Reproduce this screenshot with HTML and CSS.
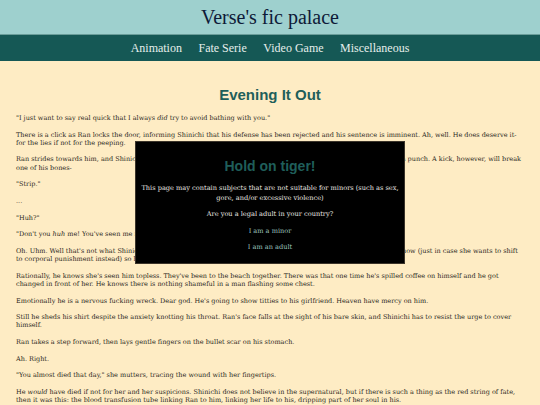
FILE: index.html
```html
<!DOCTYPE html>
<html lang="en">

<head>
    <meta charset="UTF-8">
    <meta name="viewport" content="width=device-width, initial-scale=1.0">
    <title>Evening It Out - Verse's fic palace</title>
    <link rel="stylesheet" href="styles.css">
</head>

<body>
    <header class="site-header">
        <div class="site-title">Verse's fic palace</div>
        <nav class="site-nav">
            <a href="#">Animation</a>
            <a href="#">Fate Serie</a>
            <a href="#">Video Game</a>
            <a href="#">Miscellaneous</a>
        </nav>
    </header>

    <main class="story">
        <h1>Evening It Out</h1>
        <p>"I just want to say real quick that I always <em>did</em> try to avoid bathing with you."</p>
        <p>There is a click as Ran locks the door, informing Shinichi that his defense has been rejected and his sentence is imminent. Ah, well. He does deserve it- for the lies if not for the peeping.</p>
        <p>Ran strides towards him, and Shinichi braces himself for the worst. He can take a slap, he can probably just survive a punch. A kick, however, will break one of his bones-</p>
        <p>"Strip."</p>
        <p>...</p>
        <p>"Huh?"</p>
        <p>"Don't you <em>huh</em> me! You've seen me naked, so now it's my turn!"</p>
        <p>Oh. Uhm. Well that's not what Shinichi was expecting at all, but he really isn't going to argue with her about it right now (just in case she wants to shift to corporal punishment instead) so he complies.</p>
        <p>Rationally, he knows she's seen him topless. They've been to the beach together. There was that one time he's spilled coffee on himself and he got changed in front of her. He knows there is nothing shameful in a man flashing some chest.</p>
        <p>Emotionally he is a nervous fucking wreck. Dear god. He's going to show titties to his girlfriend. Heaven have mercy on him.</p>
        <p>Still he sheds his shirt despite the anxiety knotting his throat. Ran's face falls at the sight of his bare skin, and Shinichi has to resist the urge to cover himself.</p>
        <p>Ran takes a step forward, then lays gentle fingers on the bullet scar on his stomach.</p>
        <p>Ah. Right.</p>
        <p>"You almost died that day," she mutters, tracing the wound with her fingertips.</p>
        <p>He <em>would</em> have died if not for her and her suspicions. Shinichi does not believe in the supernatural, but if there is such a thing as the red string of fate, then it was this: the blood transfusion tube linking Ran to him, linking her life to his, dripping part of her soul in his.</p>
    </main>

    <!-- age check, shown until the reader picks an answer -->
    <div class="gate" id="ageGate">
        <div class="gate-box">
            <h2>Hold on tiger!</h2>
            <p>This page may contain subjects that are not suitable for minors (such as sex, gore, and/or excessive violence)</p>
            <p>Are you a legal adult in your country?</p>
            <p><a href="#">I am a minor</a></p>
            <p><a href="#" onclick="document.getElementById('ageGate').style.display = 'none'">I am an adult</a></p>
        </div>
    </div>
</body>

</html>
```

FILE: styles.css
```css
body {
    margin: 0;
    background-color: #feecc4;
    color: #2a2722;
    font-family: "Liberation Serif", "DejaVu Serif", serif;
}

.site-header {
    text-align: center;
}

.site-title {
    background-color: #9ed0ce;
    color: #0e1a38;
    font-size: 20px;
    line-height: 34px;
    height: 34px;
    border-bottom: 1px solid #6a9d9a;
}

.site-nav {
    background-color: #155855;
    height: 26px;
    display: flex;
    justify-content: center;
    align-items: center;
    gap: 16.5px;
}

.site-nav a {
    color: #e6efec;
    text-decoration: none;
    font-size: 12px;
}

/* story text: small, sturdy serif */
.story,
.gate-box {
    font-family: "DejaVu Serif", "Liberation Serif", serif;
}

.story {
    padding: 0 16px;
    font-size: 6.5px;
    line-height: 8.3px;
}

.story h1 {
    font-family: "Liberation Sans", Arial, sans-serif;
    font-size: 15px;
    line-height: 17px;
    color: #1f5f5a;
    text-align: center;
    margin: 25px 0 11px;
}

.story p {
    margin: 8.3px 0;
}

.gate {
    position: fixed;
    top: 0;
    left: 0;
    right: 0;
    bottom: 0;
    display: flex;
    justify-content: center;
    align-items: center;
}

.gate-box {
    width: 270px;
    box-sizing: border-box;
    background-color: #000;
    border: 1px solid #3b342a;
    padding: 16px 5px 11px;
    text-align: center;
    color: #ebe8e2;
    font-size: 6.6px;
    line-height: 9.4px;
}

.gate-box h2 {
    font-family: "Liberation Sans", Arial, sans-serif;
    font-size: 14px;
    line-height: 16px;
    color: #1f5e5a;
    margin: 0 0 10.6px;
}

.gate-box p {
    margin: 7px 0 0;
}

.gate-box a {
    color: #9cc4bf;
    text-decoration: none;
}
```
